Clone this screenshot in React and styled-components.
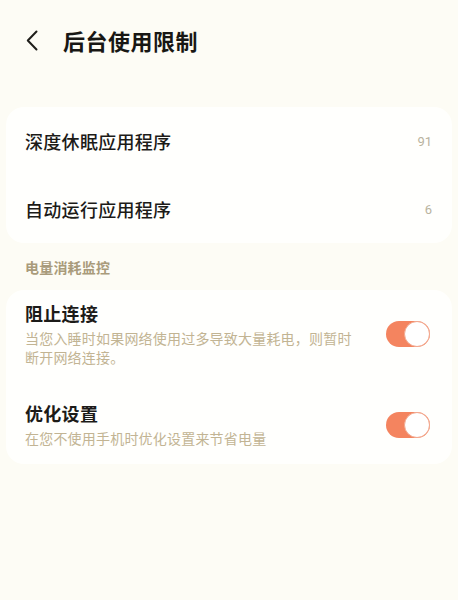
import React from "react";
import styled, { createGlobalStyle } from "styled-components";

const Global = createGlobalStyle`
  html, body {
    margin: 0;
    padding: 0;
    background: #fdfcf5;
  }
  body {
    font-family: "Noto Sans CJK SC", "Noto Sans", sans-serif;
    color: #1c1b18;
  }
`;

const Page = styled.div`
  min-height: 600px;
  background: #fdfcf5;
  display: flex;
  flex-direction: column;
`;

const Header = styled.header`
  height: 80px;
  display: flex;
  align-items: center;
  padding-left: 25px;
  gap: 24px;
  margin-bottom: 27px;
`;

const BackButton = styled.button`
  border: 0;
  background: none;
  padding: 0;
  width: 14px;
  height: 22px;
  display: flex;
  align-items: center;
  justify-content: center;
  cursor: pointer;
`;

const Title = styled.h1`
  margin: 0;
  font-size: 22px;
  font-weight: 700;
  letter-spacing: 0.5px;
  color: #181714;
`;

const Card = styled.section`
  background: #fffffd;
  border-radius: 18px;
  margin: 0 6px;
  padding: ${(p) => p.$pad || "0"};
  display: flex;
  flex-direction: column;
  gap: ${(p) => p.$gap || "0"};
`;

const LinkRow = styled.div`
  height: 68px;
  display: flex;
  align-items: center;
  justify-content: space-between;
  padding: 0 20px 0 19px;
`;

const RowLabel = styled.span`
  font-size: 18px;
  font-weight: 500;
  letter-spacing: 0.3px;
`;

const RowValue = styled.span`
  font-family: "Roboto", "Noto Sans", sans-serif;
  font-size: 13px;
  color: #b9b39f;
`;

const SectionTitle = styled.div`
  height: 47px;
  display: flex;
  align-items: center;
  padding-left: 25px;
  font-size: 14px;
  font-weight: 700;
  letter-spacing: 0.2px;
  color: #a99b7b;
`;

const ToggleRow = styled.div`
  display: flex;
  align-items: center;
  justify-content: space-between;
  padding: 0 22px 0 19px;
`;

const TextBlock = styled.div`
  max-width: 336px;
  display: flex;
  flex-direction: column;
`;

const ItemTitle = styled.div`
  font-size: 18px;
  font-weight: 600;
  line-height: 24px;
  letter-spacing: 0.3px;
  margin-bottom: 4px;
`;

const ItemDesc = styled.div`
  font-size: 14px;
  line-height: 19px;
  letter-spacing: 0.2px;
  color: #c2b493;
`;

const Track = styled.div`
  width: 44px;
  height: 26px;
  border-radius: 13px;
  background: #f4845f;
  flex-shrink: 0;
  display: flex;
  justify-content: ${(p) => (p.$on ? "flex-end" : "flex-start")};
  align-items: center;
`;

const Knob = styled.div`
  width: 26px;
  height: 26px;
  box-sizing: border-box;
  border-radius: 50%;
  background: #ffffff;
  border: 1.5px solid #f2a88f;
`;

const Chevron = () => (
  <svg width="12" height="21" viewBox="0 0 12 21" fill="none">
    <path
      d="M10.5 1.5L1.8 10.5L10.5 19.5"
      stroke="#1f1e1a"
      strokeWidth="2"
      strokeLinecap="round"
      strokeLinejoin="round"
    />
  </svg>
);

const Toggle = ({ on }) => (
  <Track $on={on}>
    <Knob />
  </Track>
);

const links = [
  { label: "深度休眠应用程序", value: "91" },
  { label: "自动运行应用程序", value: "6" },
];

const toggles = [
  {
    title: "阻止连接",
    desc: "当您入睡时如果网络使用过多导致大量耗电，则暂时断开网络连接。",
    on: true,
  },
  {
    title: "优化设置",
    desc: "在您不使用手机时优化设置来节省电量",
    on: true,
  },
];

export default function App() {
  return (
    <Page>
      <Global />
      <Header>
        <BackButton aria-label="返回">
          <Chevron />
        </BackButton>
        <Title>后台使用限制</Title>
      </Header>

      <Card>
        {links.map((l) => (
          <LinkRow key={l.label}>
            <RowLabel>{l.label}</RowLabel>
            <RowValue>{l.value}</RowValue>
          </LinkRow>
        ))}
      </Card>

      <SectionTitle>电量消耗监控</SectionTitle>

      <Card $pad="11px 0 16px" $gap="34px">
        {toggles.map((t) => (
          <ToggleRow key={t.title}>
            <TextBlock>
              <ItemTitle>{t.title}</ItemTitle>
              <ItemDesc>{t.desc}</ItemDesc>
            </TextBlock>
            <Toggle on={t.on} />
          </ToggleRow>
        ))}
      </Card>
    </Page>
  );
}
